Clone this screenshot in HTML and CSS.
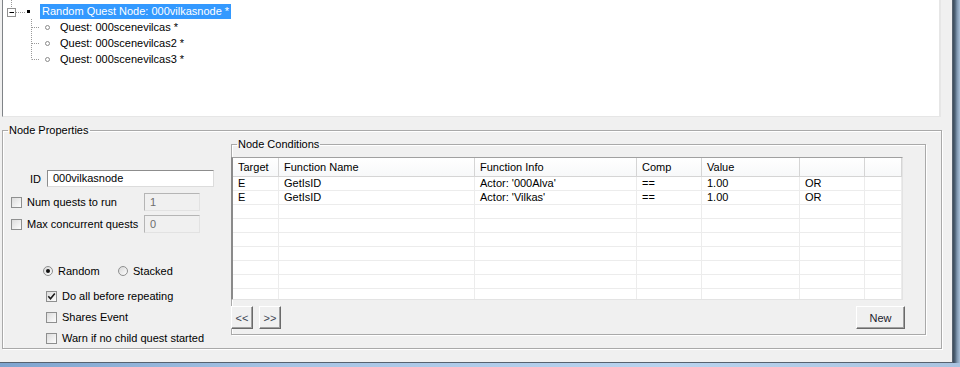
FILE: index.html
```html
<!DOCTYPE html>
<html lang="en">
<head>
  <meta charset="UTF-8">
  <title>Random Quest Node</title>
  <link rel="stylesheet" href="styles.css">
</head>
<body>

  <div class="window">
    <div class="client">

      <div class="tree">
        <div class="node node-root">
          <svg class="lines" width="37" height="19" viewBox="0 0 37 19">
            <line x1="8.5" y1="0" x2="8.5" y2="8" class="dots"/>
            <rect x="4.5" y="8.5" width="8" height="8" fill="#fff" stroke="#919191"/>
            <line x1="6.5" y1="12.5" x2="11" y2="12.5" stroke="#000"/>
            <line x1="13" y1="12.5" x2="22" y2="12.5" class="dots"/>
            <rect x="24" y="10" width="3" height="3" fill="#000"/>
          </svg>
          <span class="label selected">Random Quest Node: 000vilkasnode *</span>
        </div>
        <div class="node">
          <svg class="lines" width="57" height="16" viewBox="0 0 57 16">
            <line x1="28.5" y1="0" x2="28.5" y2="16" class="dots"/>
            <line x1="29" y1="8.5" x2="37" y2="8.5" class="dots"/>
            <circle cx="44.5" cy="8.5" r="2" fill="#fff" stroke="#8a8a8a"/>
          </svg>
          <span class="label">Quest: 000scenevilcas *</span>
        </div>
        <div class="node">
          <svg class="lines" width="57" height="16" viewBox="0 0 57 16">
            <line x1="28.5" y1="0" x2="28.5" y2="16" class="dots"/>
            <line x1="29" y1="8.5" x2="37" y2="8.5" class="dots"/>
            <circle cx="44.5" cy="8.5" r="2" fill="#fff" stroke="#8a8a8a"/>
          </svg>
          <span class="label">Quest: 000scenevilcas2 *</span>
        </div>
        <div class="node">
          <svg class="lines" width="57" height="16" viewBox="0 0 57 16">
            <line x1="28.5" y1="0" x2="28.5" y2="8.5" class="dots"/>
            <line x1="29" y1="8.5" x2="37" y2="8.5" class="dots"/>
            <circle cx="44.5" cy="8.5" r="2" fill="#fff" stroke="#8a8a8a"/>
          </svg>
          <span class="label">Quest: 000scenevilcas3 *</span>
        </div>
      </div>

      <fieldset class="group props">
        <legend>Node Properties</legend>
        <div class="props-body">

          <div class="props-left">
            <div class="row row-id">
              <span class="id-label">ID</span>
              <span class="textbox textbox-id">000vilkasnode</span>
            </div>
            <div class="row row-num">
              <span class="check"></span>
              <span class="opt-label">Num quests to run</span>
              <span class="textbox textbox-small disabled">1</span>
            </div>
            <div class="row row-max">
              <span class="check"></span>
              <span class="opt-label">Max concurrent quests</span>
              <span class="textbox textbox-small disabled">0</span>
            </div>
            <div class="row row-radio">
              <span class="radio-item">
                <span class="radio on"></span>Random
              </span>
              <span class="radio-item">
                <span class="radio"></span>Stacked
              </span>
            </div>
            <div class="row row-opt first">
              <span class="check">
                <svg width="9" height="9" viewBox="0 0 9 9"><path d="M1.3 4.3 L3.5 6.8 L7.8 1.5" fill="none" stroke="#1b1b1b" stroke-width="1.6"/></svg>
              </span>
              <span>Do all before repeating</span>
            </div>
            <div class="row row-opt">
              <span class="check"></span>
              <span>Shares Event</span>
            </div>
            <div class="row row-opt">
              <span class="check"></span>
              <span>Warn if no child quest started</span>
            </div>
          </div>

          <fieldset class="group conds">
            <legend>Node Conditions</legend>
            <div class="grid">
              <div class="grid-row grid-head">
                <span>Target</span><span>Function Name</span><span>Function Info</span><span>Comp</span><span>Value</span><span></span><span></span>
              </div>
              <div class="grid-row">
                <span>E</span><span>GetIsID</span><span>Actor: '000Alva'</span><span>==</span><span>1.00</span><span>OR</span><span></span>
              </div>
              <div class="grid-row">
                <span>E</span><span>GetIsID</span><span>Actor: 'Vilkas'</span><span>==</span><span>1.00</span><span>OR</span><span></span>
              </div>
              <div class="grid-row"><span></span><span></span><span></span><span></span><span></span><span></span><span></span></div>
              <div class="grid-row"><span></span><span></span><span></span><span></span><span></span><span></span><span></span></div>
              <div class="grid-row"><span></span><span></span><span></span><span></span><span></span><span></span><span></span></div>
              <div class="grid-row"><span></span><span></span><span></span><span></span><span></span><span></span><span></span></div>
              <div class="grid-row"><span></span><span></span><span></span><span></span><span></span><span></span><span></span></div>
              <div class="grid-row"><span></span><span></span><span></span><span></span><span></span><span></span><span></span></div>
              <div class="grid-row"><span></span><span></span><span></span><span></span><span></span><span></span><span></span></div>
            </div>
            <div class="buttons">
              <button class="btn btn-nav">&lt;&lt;</button>
              <button class="btn btn-nav">&gt;&gt;</button>
              <button class="btn btn-new">New</button>
            </div>
          </fieldset>

        </div>
      </fieldset>

    </div>
    <div class="frame-right"></div>
  </div>
  <div class="frame-bottom"></div>

</body>
</html>
```

FILE: styles.css
```css
body {
  margin: 0;
  background: #f0f0f0;
  font-family: "Liberation Sans", Arial, sans-serif;
  font-size: 11px;
  color: #000;
  overflow: hidden;
}
.window {
  display: flex;
  height: 363px;
}
.client {
  width: 952px;
  height: 362px;
  border-right: 1px solid #56626f;
  border-bottom: 1px solid #56626f;
}
.frame-right {
  flex: 1;
  background: linear-gradient(to right, #3d4b5a 0, #4e6276 2px, #7e95ad 4px, #a9c0d8 7px);
}
.frame-bottom {
  height: 4px;
  background: linear-gradient(to right, #7ea4cf, #a7c4e4 30%, #b9d3ee 70%, #a9c3df);
}

/* tree */
.tree {
  margin-left: 2px;
  width: 939px;
  height: 117px;
  box-sizing: border-box;
  background: #fff;
  border-left: 1px solid #7f8387;
  border-right: 2px solid #e6e6e6;
  border-bottom: 1px solid #e6e6e6;
}
.node {
  display: flex;
  align-items: center;
  height: 16px;
}
.node-root {
  height: 19px;
  align-items: flex-end;
}
.lines {
  display: block;
  flex: none;
}
.dots {
  stroke: #9a9a9a;
  stroke-dasharray: 1 1;
}
.label {
  white-space: nowrap;
  line-height: 15px;
}
.selected {
  background: #3399ff;
  color: #fff;
  padding: 0 2px 0 2px;
}

/* group boxes */
.group {
  margin: 0;
  padding: 0;
  border: 1px solid #a9a9a9;
  box-shadow: inset 1px 1px 0 #fff, 1px 1px 0 #fff;
  box-sizing: border-box;
}
.group legend {
  margin-left: 5px;
  padding: 0 1px;
  line-height: 13px;
}
.props {
  margin: 7px 0 0 2px;
  width: 940px;
  height: 225px;
}
.props-body {
  display: flex;
}
.props-left {
  width: 228px;
  flex: none;
}
.row {
  display: flex;
  align-items: center;
}
.row-id {
  margin-top: 33px;
  height: 17px;
}
.id-label {
  width: 38px;
  text-align: right;
  padding-right: 6px;
}
.textbox {
  box-sizing: border-box;
  background: #fff;
  border: 1px solid;
  border-color: #8d8d8d #dcdcdc #dcdcdc #8d8d8d;
  padding-left: 5px;
  line-height: 15px;
}
.textbox-id {
  width: 167px;
  height: 17px;
}
.textbox-small {
  width: 56px;
  height: 18px;
  line-height: 16px;
  flex: none;
}
.disabled {
  background: #f0f0f0;
  border-color: #b5b5b5 #e2e2e2 #e2e2e2 #b5b5b5;
  color: #6d6d6d;
}
.row-num {
  margin-top: 6px;
  height: 18px;
  padding-left: 8px;
}
.row-max {
  margin-top: 4px;
  height: 18px;
  padding-left: 8px;
}
.opt-label {
  width: 117px;
  flex: none;
  margin-left: 5px;
  white-space: nowrap;
}
.check {
  width: 11px;
  height: 11px;
  flex: none;
  box-sizing: border-box;
  border: 1px solid #8e8f8f;
  background: linear-gradient(135deg, #dcdcdc, #fdfdfd);
  display: flex;
  align-items: center;
  justify-content: center;
}
.row-radio {
  margin-top: 31px;
  height: 14px;
  padding-left: 40px;
}
.radio-item {
  display: flex;
  align-items: center;
  width: 75px;
}
.radio {
  width: 10px;
  height: 10px;
  box-sizing: border-box;
  border: 1px solid #8e8f8f;
  border-radius: 50%;
  background: linear-gradient(135deg, #d8d8d8, #fdfdfd);
  margin-right: 5px;
  display: flex;
  align-items: center;
  justify-content: center;
}
.radio.on::after {
  content: "";
  width: 4px;
  height: 4px;
  border-radius: 50%;
  background: #111;
}
.row-opt {
  margin-top: 7px;
  height: 14px;
  padding-left: 43px;
  gap: 5px;
  white-space: nowrap;
}
.row-opt.first {
  margin-top: 11px;
}

/* conditions */
.conds {
  margin-top: 1px;
  width: 695px;
  height: 197px;
}
.grid {
  margin: 6px 0 0 -1px;
  width: 672px;
  height: 143px;
  box-sizing: border-box;
  overflow: hidden;
  background: #fff;
  border-top: 1px solid #a0a0a0;
  border-left: 2px solid #8a8a8a;
  border-right: 1px solid #e3e3e3;
  border-bottom: 1px solid #e3e3e3;
}
.grid-row {
  display: grid;
  grid-template-columns: 46px 196px 162px 65px 98px 65px 37px;
  height: 14px;
}
.grid-row span {
  box-sizing: border-box;
  border-right: 1px solid #ececec;
  border-bottom: 1px solid #ececec;
  padding-left: 5px;
  line-height: 13px;
  white-space: nowrap;
}
.grid-head {
  height: 19px;
  background: linear-gradient(#ffffff, #f7f8f9);
}
.grid-head span {
  border-right-color: #d5d5d5;
  border-bottom-color: #d5d5d5;
  line-height: 18px;
}
.buttons {
  display: flex;
  gap: 6px;
  width: 674px;
  margin: 6px 0 0 -1px;
}
.btn {
  height: 23px;
  box-sizing: border-box;
  padding: 0;
  font: inherit;
  color: #1c1c2c;
  background: #f0f0f0;
  border: 1px solid;
  border-color: #fff #6a6a6a #6a6a6a #fff;
  box-shadow: inset -1px -1px 0 #a0a0a0;
}
.btn-nav {
  width: 22px;
  color: #3b4452;
}
.btn-new {
  width: 49px;
  margin-left: auto;
}
```
